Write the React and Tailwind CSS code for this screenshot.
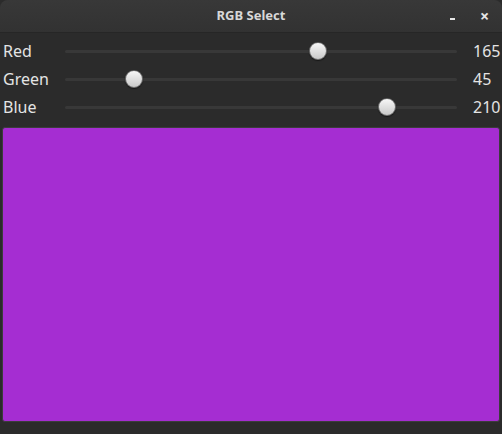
import React from 'react';

const channels = [
  { name: 'Red', value: 165 },
  { name: 'Green', value: 45 },
  { name: 'Blue', value: 210 },
];

const Slider = ({ value }) => {
  const left = (value / 255) * 391;
  return (
    <div className="relative h-[28px] w-[392px] flex items-center">
      <div className="h-[3px] w-full rounded-full bg-[#383838]" />
      <div
        className="absolute top-[5px] w-[18px] h-[18px] -ml-[9px] rounded-full bg-gradient-to-b from-[#f7f7f7] to-[#c9c9c9] border border-[#1c1c1c]/60 shadow-[0_1px_1px_rgba(0,0,0,0.5)]"
        style={{ left }}
      />
    </div>
  );
};

export default function App() {
  const [r, g, b] = channels.map((c) => c.value);
  return (
    <div className="w-[502px] h-[434px] bg-[#2b2b2b] flex flex-col overflow-hidden font-['Noto_Sans',sans-serif]">
      <div className="relative h-[33px] shrink-0 rounded-t-[8px] bg-gradient-to-b from-[#383838] to-[#323232] border-b border-[#262626] flex items-center justify-center">
        <span className="text-[13px] font-bold text-[#d8d8d8]">RGB Select</span>
        <span className="absolute left-[450px] top-[18px] w-[5px] h-[2px] bg-[#e6e6e6]" />
        <span className="absolute left-[480px] top-[7px] text-[16px] font-bold text-[#e6e6e6] leading-[18px]">×</span>
      </div>
      <div className="pt-[4px] flex flex-col">
        {channels.map((c) => (
          <div key={c.name} className="h-[28px] flex items-center">
            <span className="w-[65px] pl-[3px] text-[16px] text-[#e4e4e4]">{c.name}</span>
            <Slider value={c.value} />
            <span className="ml-[16px] text-[16px] text-[#e4e4e4] whitespace-nowrap">{c.value}</span>
          </div>
        ))}
      </div>
      <div
        className="mt-[6px] mx-[2px] h-[295px] rounded-[3px] border border-[#3c3c3c]"
        style={{ backgroundColor: `rgb(${r}, ${g}, ${b})` }}
      />
    </div>
  );
}
